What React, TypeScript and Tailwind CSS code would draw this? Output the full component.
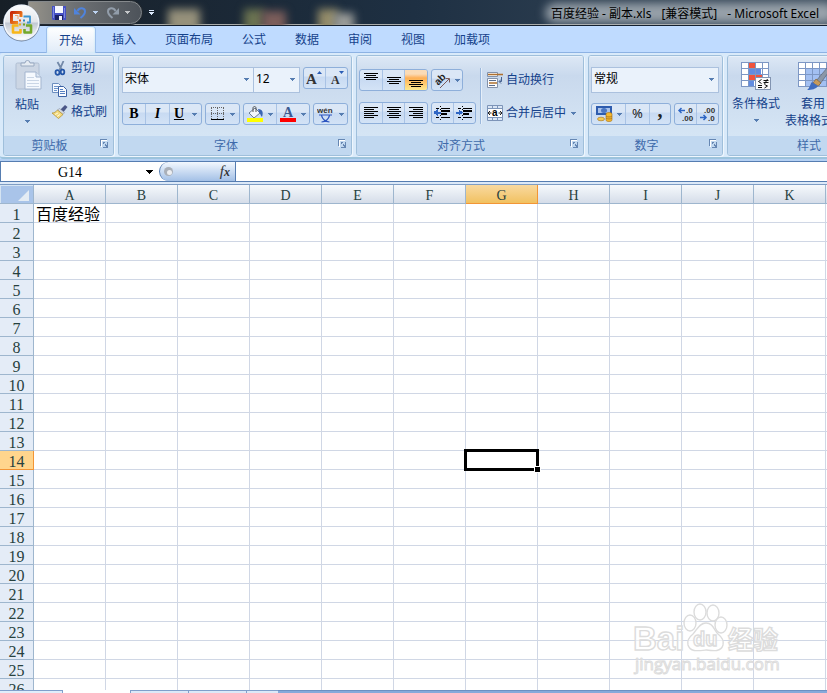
import type { ReactNode } from 'react'
import clsx from 'clsx'

const TABS = ['开始', '插入', '页面布局', '公式', '数据', '审阅', '视图', '加载项']
const COLUMNS = ['A', 'B', 'C', 'D', 'E', 'F', 'G', 'H', 'I', 'J', 'K', 'L']
const ROWS = Array.from({ length: 26 }, (_, i) => i + 1)
const CELLS: Record<string, string> = { A1: '百度经验' }
const ACTIVE = { col: 'G', row: 14 }

function Arrow({ className = 'text-[#567db1]' }: { className?: string }) {
  return (
    <svg width="5" height="3" viewBox="0 0 5 3" className={clsx('shrink-0', className)} shapeRendering="crispEdges" aria-hidden>
      <path d="M0 0h5v1H4v1H3v1H2V2H1V1H0z" fill="currentColor" />
    </svg>
  )
}

/* Horizontal strokes, each [x, y, width] */
function Lines({ rows }: { rows: number[][] }) {
  return (
    <svg width="16" height="16" viewBox="0 0 16 16" shapeRendering="crispEdges" aria-hidden>
      {rows.map(([x, y, w]) => (
        <rect key={`${x}-${y}`} x={x} y={y} width={w} height="1" fill="#000" />
      ))}
    </svg>
  )
}

const vertical = (top: number) => [0, 1, 2, 3].map((i) => [i % 2 ? 3 : 1, top + i * 2, i % 2 ? 10 : 14])
const horizontal = (short: number) => [0, 1, 2, 3, 4, 5].map((i) => [i % 2 ? short : 1, 2 + i * 2, i % 2 ? 10 : 14])

function Group({ title, className, launcher = true, children }: { title: string; className: string; launcher?: boolean; children: ReactNode }) {
  return (
    <section
      className={clsx(
        'flex h-[101px] shrink-0 flex-col overflow-hidden rounded-[3px] border border-[#9fbfdb] bg-linear-to-b from-[#dde8f5] from-0% via-[#c9d9ed] via-20% to-[#d9e9f7] shadow-[1px_1px_0_#eef6fd]',
        className,
      )}
    >
      <div className="h-20 border-t border-[#e9f1fa]">{children}</div>
      <div
        className={clsx(
          'relative flex h-[19px] items-center justify-center bg-[#c1d8f0] pt-px text-[#3e6aaa]',
          launcher && 'pr-[18px]',
        )}
      >
        {title}
        {launcher && (
          <button aria-label={`${title}设置`} className="absolute top-[3px] right-1">
            <svg width="9" height="9" viewBox="0 0 9 9" shapeRendering="crispEdges">
              <path d="M1 1h6v1H2v6H1z" fill="#fff" />
              <path d="M0 7V0h7v1H1v6z" fill="#6687b3" />
              <path d="M3 3h2v1H4v1H3zM5 5h1v1H5zM8 3v6H3V8h3V7H5V6h2V3z" fill="#6687b3" />
            </svg>
          </button>
        )}
      </div>
    </section>
  )
}

function Bar({ className, children }: { className?: string; children: ReactNode }) {
  return (
    <div
      className={clsx(
        'flex h-[22px] shrink-0 divide-x divide-[#a9c3e5] overflow-hidden rounded-[3px] border border-[#8eafda] bg-linear-to-b from-[#dbe7f6] from-40% via-[#c8daf2] via-45% to-[#d3e3f6]',
        className,
      )}
    >
      {children}
    </div>
  )
}

function Tool({ label, className = 'flex-1', arrow, active, children }: { label: string; className?: string; arrow?: boolean; active?: boolean; children: ReactNode }) {
  return (
    <button
      aria-label={label}
      className={clsx(
        'flex h-full items-center justify-center gap-1',
        active && 'bg-linear-to-b from-[#fbdbb5] from-20% via-[#fdaf54] via-40% to-[#fde98f]',
        className,
      )}
    >
      {children}
      {arrow && <Arrow />}
    </button>
  )
}

function Picker({ label, value, className }: { label: string; value: string; className: string }) {
  return (
    <div className={clsx('relative', className)}>
      <select
        aria-label={label}
        className="block h-[26px] w-full appearance-none border border-[#abc1de] bg-[#eaf2fb] pb-[2px] pl-[2px] text-black"
      >
        <option>{value}</option>
      </select>
      <span className="pointer-events-none absolute top-[11px] right-[5px]">
        <Arrow />
      </span>
    </div>
  )
}

function OfficeButton() {
  return (
    <button aria-label="Office 按钮" className="absolute top-[3px] left-[2px] z-10">
      <svg width="39" height="39" viewBox="0 0 39 39">
        <defs>
          <linearGradient id="orb" x1="0" y1="0" x2="0" y2="1">
            <stop offset="0" stopColor="#fbfcfd" />
            <stop offset=".48" stopColor="#e3e6eb" />
            <stop offset=".52" stopColor="#c2c9d4" />
            <stop offset="1" stopColor="#fdfdfe" />
          </linearGradient>
          <linearGradient id="orange" x1="0" y1="0" x2="1" y2="1">
            <stop offset="0" stopColor="#c8290a" />
            <stop offset="1" stopColor="#f89a23" />
          </linearGradient>
        </defs>
        <circle cx="19.500" cy="20" r="18.500" fill="#6b7f9c" />
        <circle cx="19.500" cy="19.500" r="18" fill="#f3f6fa" />
        <circle cx="19.500" cy="19.500" r="16.500" fill="url(#orb)" />
        <g fill="none" strokeLinejoin="round">
          <path d="M16 19.500H9.500V9.500H19V14" stroke="url(#orange)" strokeWidth="3" />
          <path d="M16 16v-3.500h-3" stroke="#f3a46a" />
          <path d="M21.500 13.500h6.500V19.500h-3" stroke="#3b94cf" strokeWidth="1.800" />
          <path d="M16.500 22.500H11v7h7.500V26" stroke="#f7b61a" strokeWidth="2.600" />
          <path d="M24 22.500h5v7h-6.500V26" stroke="#74a82b" strokeWidth="2.600" />
        </g>
        <rect x="17" y="16.500" width="2" height="2" fill="#e4571c" />
        <rect x="21" y="16.500" width="2" height="2" fill="#2f86c7" />
        <rect x="17" y="20.500" width="2" height="2" fill="#f0a818" />
        <rect x="21" y="20.500" width="2" height="2" fill="#6ba32b" />
      </svg>
    </button>
  )
}

function TitleBar() {
  return (
    <header className="relative flex h-[26px] items-start overflow-hidden border-b border-[#14202f] bg-linear-to-r from-[#171f27] via-[#1e3043] to-[#3e4f60] shadow-[inset_0_-1px_0_#a9acab]">
      {/* desktop icons seen through the glass */}
      <div className="absolute top-[9px] left-[168px] h-6 w-8 bg-[#96917b] blur-[4px]" />
      <div className="absolute top-[9px] left-[244px] h-6 w-5 bg-[#6b7351] blur-[4px]" />
      <div className="absolute top-[11px] left-[262px] h-6 w-6 bg-[#7c5e5b] blur-[4px]" />
      <div className="absolute top-[9px] left-[318px] h-6 w-5 bg-[#948c69] blur-[4px]" />
      <div className="absolute top-[13px] left-[334px] h-5 w-5 bg-[#9a9c99] blur-[4px]" />
      <div className="absolute -right-2 top-[3px] h-[20px] w-[290px] rounded-full bg-[#b0b8be]/80 blur-[5px]" />

      <div className="relative mt-px ml-7 flex h-[23px] w-[114px] items-center rounded-r-full border border-[#85898c] bg-linear-to-r from-[#96938a] via-[#6e7174] via-40% to-[#4d535a] pl-[23px] shadow-[0_0_0_1px_#22282e]">
        <button aria-label="保存">
          <svg width="14" height="14" viewBox="0 0 14 14">
            <path d="M0 0h14v14H1l-1-1z" fill="#4650c4" />
            <path d="M3 0h8v7H3z" fill="#f5f7ff" />
            <path d="M1 1h1v11H1zM12 2h1v10h-1z" fill="#7c88e0" />
            <path d="M3 9h8v5H3z" fill="#1c2266" />
            <path d="M7 10h3v4H7z" fill="#f0f2fb" />
          </svg>
        </button>
        <button aria-label="撤销" className="ml-2">
          <svg width="13" height="13" viewBox="0 0 13 13">
            <path d="M3.500 5C5.500 1 11 1.500 11 5.500c0 3-2 4.500-4.500 6.500" fill="none" stroke="#4f83dc" strokeWidth="2" />
            <path d="M0 2v6.500h6.500z" fill="#4f83dc" />
          </svg>
        </button>
        <Arrow className="ml-[6px] text-[#bcd2f0]" />
        <button aria-label="恢复" className="ml-2">
          <svg width="13" height="13" viewBox="0 0 13 13">
            <path d="M9.500 5C7.500 1 2 1.500 2 5.500c0 3 2 4.500 4.500 6.500" fill="none" stroke="#929daa" strokeWidth="2" />
            <path d="M13 2v6.500H6.500z" fill="#929daa" />
          </svg>
        </button>
        <Arrow className="ml-[6px] text-[#c4c6c8]" />
      </div>
      <button aria-label="自定义快速访问工具栏" className="relative mt-[10px] ml-[6px]">
        <svg width="7" height="6" viewBox="0 0 7 6" shapeRendering="crispEdges">
          <path d="M1 0h5v1H1zM1 2h5v1H5v1H4v1H3V4H2V3H1z" fill="#dbe8fb" />
        </svg>
      </button>
      <h1 className="relative mr-2 ml-auto flex gap-[10px] text-[12px] leading-[28px] whitespace-nowrap text-black">
        <span>百度经验 - 副本.xls</span>
        <span>[兼容模式]</span>
        <span>- Microsoft Excel</span>
      </h1>
    </header>
  )
}

function TabStrip() {
  return (
    <nav className="flex h-[27px] shrink-0 items-end gap-[5px] border-b border-[#8db2e3] bg-[#bfdbff] pl-[47px]">
      {TABS.map((tab, i) => (
        <button
          key={tab}
          className={clsx(
            'h-[26px] shrink-0 px-3 pt-[2px] text-[#15428b]',
            i === 0 && '-mb-px rounded-t-[3px] bg-linear-to-b from-white to-[#e0ebf8] shadow-[0_0_0_1px_#9cbfec,inset_0_0_2px_#b6e5f5]',
          )}
        >
          {tab}
        </button>
      ))}
    </nav>
  )
}

function ClipboardGroup() {
  return (
    <Group title="剪贴板" className="w-[111px]">
      <div className="flex">
        <button className="flex w-[46px] flex-col items-center pt-[3px]">
          <svg width="28" height="31" viewBox="0 0 28 31" className="ml-[4px]">
            <rect x="1" y="3" width="23" height="26" rx="1.500" fill="#ccd6e4" stroke="#aebdd2" />
            <path d="M6 6V3h4a2.500 2.500 0 0 1 5 0h4v3z" fill="#e5ebf2" stroke="#98a9c0" />
            <path d="M10 12h11l5 5v12H10z" fill="#f5f9fe" stroke="#a3b5cf" />
            <path d="M21 12v5h5" fill="#dce6f2" stroke="#a3b5cf" />
            <path d="M12 17.500h7M12 20.500h12M12 23.500h12M12 26.500h12" stroke="#cad6e6" />
          </svg>
          <span className="mt-[6px] leading-4">粘贴</span>
          <Arrow className="mt-[7px] text-[#567db1]" />
        </button>
        <div className="flex flex-col pl-1">
          <button className="flex h-[22px] items-center gap-[3px]">
            <svg width="14" height="15" viewBox="0 0 14 15">
              <path d="M3.500 1l4.500 8M9.500 0l-4 9" stroke="#7389a8" strokeWidth="1.800" />
              <ellipse cx="3.500" cy="11.500" rx="2" ry="2.300" fill="none" stroke="#2456a8" strokeWidth="1.800" />
              <ellipse cx="8.500" cy="11" rx="1.800" ry="2.300" fill="none" stroke="#2456a8" strokeWidth="1.800" />
            </svg>
            剪切
          </button>
          <button className="-ml-[2px] flex h-[22px] items-center gap-[3px]">
            <svg width="16" height="14" viewBox="0 0 16 14">
              <path d="M.5.5h6l2 2v7h-8z" fill="#f4f8fe" stroke="#6c8ebf" />
              <path d="M2 3.500h4M2 5.500h4M2 7.500h3" stroke="#6d94cb" />
              <path d="M6.500 3.500h5l3 3v7h-8z" fill="#fafcff" stroke="#3c62a5" />
              <path d="M8 6.500h3M8 8.500h5M8 10.500h5" stroke="#5580c2" />
            </svg>
            复制
          </button>
          <button className="-ml-[2px] flex h-[22px] items-center gap-[3px]">
            <svg width="16" height="14" viewBox="0 0 16 14">
              <path d="M13 0l2.500 2-4 5-3-2.500z" fill="#4a5687" />
              <path d="M7.500 3.500l5 4-1.500 2-5.500-4.500z" fill="#d3d8e2" stroke="#7d8699" strokeWidth=".5" />
              <path d="M5.500 5L11 9.500 6.500 13.500 0 8c2 0 4-1 5.500-3z" fill="#f3da7d" stroke="#b08c2c" strokeWidth=".7" />
              <path d="M3 9.500l3-1.500M5 11.500l3-2" stroke="#fff8d5" />
            </svg>
            格式刷
          </button>
        </div>
      </div>
    </Group>
  )
}

function FontGroup() {
  return (
    <Group title="字体" className="w-[234px]">
      <div className="flex flex-col gap-[10px] px-[3px] pt-[10px]">
        <div className="flex h-[26px] items-start">
          <Picker label="字体名称" value="宋体" className="w-[132px]" />
          <Picker label="字号" value="12" className="-ml-px w-[47px]" />
          <Bar className="ml-[3px] w-[45px]">
            <Tool label="增大字号">
              <svg width="17" height="18" viewBox="0 0 17 18">
                <text x="0" y="15" fontFamily="Liberation Serif" fontWeight="700" fontSize="15" fill="#333">A</text>
                <path d="M11 5l2.500-3L16 5z" fill="#2b5db5" />
              </svg>
            </Tool>
            <Tool label="减小字号">
              <svg width="16" height="18" viewBox="0 0 16 18">
                <text x="2" y="15" fontFamily="Liberation Serif" fontWeight="700" fontSize="12" fill="#333">A</text>
                <path d="M10 2h5l-2.500 3z" fill="#2b5db5" />
              </svg>
            </Tool>
          </Bar>
        </div>
        <div className="flex gap-[3px] font-['Liberation_Serif',serif] text-[14px] leading-4 text-black">
          <Bar className="w-20">
            <Tool label="加粗" className="w-[23px]">
              <b>B</b>
            </Tool>
            <Tool label="倾斜" className="w-6">
              <b className="italic">I</b>
            </Tool>
            <Tool label="下划线" className="flex-1" arrow>
              <b className="mr-1 underline">U</b>
            </Tool>
          </Bar>
          <Bar className="w-[35px]">
            <Tool label="边框" arrow>
              <svg width="16" height="14" viewBox="0 0 16 14" shapeRendering="crispEdges">
                <path d="M1.500 1v11M7.500 1v11M13.500 1v11M1 .5h13M1 6.500h13" stroke="#666" strokeDasharray="1 1" />
                <path d="M1 12h13v1H1z" />
              </svg>
            </Tool>
          </Bar>
          <Bar className="w-[67px]">
            <Tool label="填充颜色" arrow>
              <svg width="17" height="18" viewBox="0 0 17 18">
                <path d="M2 8l6-5 5 5-6 5z" fill="#f3f7fc" stroke="#6c7c93" />
                <path d="M6 7V3c0-2 3-2 3 0v4" fill="none" stroke="#555" />
                <path d="M11 4c5 0 5.500 4 4 8-1.500-1-1-3-3-4.500z" fill="#3a65b3" />
                <path d="M0 13h16v4H0z" fill="#ff0" />
              </svg>
            </Tool>
            <Tool label="字体颜色" arrow>
              <svg width="17" height="18" viewBox="0 0 17 18">
                <text x="3" y="12" fontFamily="Liberation Serif" fontWeight="700" fontSize="14" fill="#3c5a92">A</text>
                <path d="M0 13h16v4H0z" fill="#f00" />
              </svg>
            </Tool>
          </Bar>
          <Bar className="w-[35px]">
            <Tool label="拼音指南" arrow>
              <svg width="18" height="18" viewBox="0 0 18 18">
                <text x="0" y="8" fontFamily="Liberation Sans" fontWeight="700" fontSize="8" fill="#333">wén</text>
                <path d="M2 10h13M4.500 10.500c1 4 4 6 8 6.500M12.500 10.500c-1 4-4 6-8 6.500" fill="none" stroke="#2d55c0" strokeWidth="1.200" />
              </svg>
            </Tool>
          </Bar>
        </div>
      </div>
    </Group>
  )
}

function Indent({ flip }: { flip?: boolean }) {
  return (
    <svg width="17" height="16" viewBox="0 0 17 16" shapeRendering="crispEdges" aria-hidden>
      <path d="M2 3h3v1H2zM7 3h9v1H7zM7 5h9v2H7zM7 8h6v2H7zM2 12h3v1H2zM7 12h9v1H7zM6 1h1v1H6zM6 14h1v1H6zM6 4h1v1H6zM6 10h1v1H6z" />
      <path d={flip ? 'M6 7.500L3 5v2H0v1h3v2z' : 'M0 7.500L3 5v2h3v1H3v2z'} fill="#2f66c4" stroke="#2f66c4" />
    </svg>
  )
}

function AlignGroup() {
  return (
    <Group title="对齐方式" className="w-[228px]">
      <div className="flex pt-[11px] pl-[2px]">
        <div className="flex flex-col gap-[11px] pt-px">
          <div className="flex gap-[3px]">
            <Bar className="w-[69px]">
              <Tool label="顶端对齐"><Lines rows={vertical(1)} /></Tool>
              <Tool label="垂直居中"><Lines rows={vertical(5)} /></Tool>
              <Tool label="底端对齐" active><Lines rows={vertical(8)} /></Tool>
            </Bar>
            <Bar className="w-8">
              <Tool label="方向" arrow>
                <svg width="17" height="17" viewBox="0 0 17 17">
                  <text transform="rotate(-45 7 8)" x="1" y="10" fontFamily="Liberation Sans" fontWeight="700" fontSize="10" fill="#222">ab</text>
                  <path d="M6 16l9-9M11.500 6.500H15.500V10.500" fill="none" stroke="#7a5a5a" />
                </svg>
              </Tool>
            </Bar>
          </div>
          <div className="flex gap-[3px]">
            <Bar className="w-[69px]">
              <Tool label="文本左对齐"><Lines rows={horizontal(1)} /></Tool>
              <Tool label="居中"><Lines rows={horizontal(3)} /></Tool>
              <Tool label="文本右对齐"><Lines rows={horizontal(5)} /></Tool>
            </Bar>
            <Bar className="w-[45px]">
              <Tool label="减少缩进量"><Indent /></Tool>
              <Tool label="增加缩进量"><Indent flip /></Tool>
            </Bar>
          </div>
        </div>
        <div className="mr-[6px] ml-1 h-14 w-px bg-[#9bb8dc] shadow-[1px_0_0_#e6eff9]" />
        <div className="flex flex-col gap-[11px] pt-px">
          <button className="flex h-[22px] items-center gap-[3px]">
            <svg width="16" height="16" viewBox="0 0 16 16">
              <path d="M.5.5h10v4H.5zM.5 6.500h10v9H.5z" fill="#fbfcfe" stroke="#8392aa" />
              <path d="M2 8.500h7M2 13.500h6" stroke="#5a6c8c" />
              <path d="M1 2.500h15M2 11h8" stroke="#b0712f" strokeWidth="1.400" />
              <path d="M14.500 5v4.500h-2m1.500-2l-2 2 2 2" fill="none" stroke="#44608f" />
            </svg>
            自动换行
          </button>
          <button className="flex h-[22px] items-center gap-[3px]">
            <svg width="16" height="16" viewBox="0 0 16 16">
              <path d="M.5.5h15v15H.5z" fill="#d9e5f5" stroke="#7d94b8" />
              <path d="M0 3.500h16M0 12.500h16M5.500 1v3M10.500 1v3M5.500 12v3M10.500 12v3" stroke="#7d95b9" />
              <path d="M1 4h14v8H1z" fill="#fff" />
              <path d="M1 8h3.500M15 8h-3.500M3 6L1 8l2 2M13 6l2 2-2 2" fill="none" stroke="#222" />
              <text x="5" y="11" fontFamily="Liberation Sans" fontWeight="700" fontSize="10">a</text>
            </svg>
            合并后居中
            <Arrow className="ml-[2px] text-[#567db1]" />
          </button>
        </div>
      </div>
    </Group>
  )
}

function Decimal({ more }: { more?: boolean }) {
  return (
    <svg width="18" height="20" viewBox="0 0 18 20" aria-hidden>
      <g fontFamily="Liberation Sans" fontWeight="700" fontSize="8" fill="#333">
        <text x={more ? 9 : 5} y="9">{more ? '.0' : '.00'}</text>
        <text x={more ? 5 : 9} y="17">{more ? '.00' : '.0'}</text>
      </g>
      {more ? (
        <path d="M2 6.500h6M4.500 4L2 6.500 4.500 9" fill="none" stroke="#2f66c4" strokeWidth="1.500" />
      ) : (
        <path d="M1 13.500h6M4.500 11L7 13.500 4.500 16" fill="none" stroke="#2f66c4" strokeWidth="1.500" />
      )}
    </svg>
  )
}

function NumberGroup() {
  return (
    <Group title="数字" className="w-[135px]">
      <div className="flex flex-col gap-[10px] px-[2px] pt-[10px]">
        <Picker label="数字格式" value="常规" className="w-32" />
        <div className="flex gap-[3px]">
          <Bar className="w-20">
            <Tool label="会计数字格式" className="w-[34px]" arrow>
              <svg width="17" height="16" viewBox="0 0 17 16">
                <path d="M0 0h16v9H0z" fill="#2e5cae" />
                <path d="M2 2h12v5H2z" fill="#a9c2ea" />
                <ellipse cx="8" cy="4.500" rx="3" ry="2.500" fill="#4b77c3" />
                <path d="M10 8c0-2 6-2 6 0v6c0 2-6 2-6 0z" fill="#f4b82e" stroke="#a4701a" strokeWidth=".6" />
                <path d="M10 10c1 1.300 5 1.300 6 0M10 12c1 1.300 5 1.300 6 0" fill="none" stroke="#a4701a" strokeWidth=".8" />
                <ellipse cx="5" cy="13" rx="3.500" ry="1.800" fill="#f6ca4e" stroke="#a4701a" strokeWidth=".6" />
              </svg>
            </Tool>
            <Tool label="百分比样式" className="w-6">
              <span className="text-[13px] text-[#222]">%</span>
            </Tool>
            <Tool label="千位分隔样式">
              <span className="pb-2 font-['Liberation_Serif',serif] text-[20px] leading-4 font-bold text-[#222]">,</span>
            </Tool>
          </Bar>
          <Bar className="w-[45px]">
            <Tool label="增加小数位数"><Decimal more /></Tool>
            <Tool label="减少小数位数"><Decimal /></Tool>
          </Bar>
        </div>
      </div>
    </Group>
  )
}

function StylesGroup() {
  return (
    <Group title="样式" className="w-[164px]" launcher={false}>
      <div className="flex gap-[5px] pt-[5px] pl-1">
        <button className="flex w-12 flex-col items-center">
          <svg width="30" height="29" viewBox="0 0 30 29" shapeRendering="crispEdges">
            <path d="M1 1h27v24H1z" fill="#fff" />
            <path d="M8 1h6v6H8zM8 13h13v6H8z" fill="#f0533c" />
            <path d="M8 7h12v6H8zM8 19h5v6H8z" fill="#628ce0" />
            <path d="M1 .5h27M1 6.500h27M1 12.500h27M1 18.500h27M1 24.500h27M.5 0v25M7.500 0v25M14.500 0v25M21.500 0v25M27.500 0v25" stroke="#7d97c4" fill="none" />
            <path d="M14.500 15.500h15v12h-15z" fill="#fafafa" stroke="#8294b1" />
            <path d="M20.500 17.500L17.500 19.500l3 2M17 23.500h4M17 25.500h4M22.500 18.500h5M22.500 20.500h5M26.500 17l-3 5M23.500 22.500l3 1.500-3 2" fill="none" stroke="#111" shapeRendering="auto" />
          </svg>
          <span className="mt-1 leading-[17px]">条件格式</span>
          <Arrow className="mt-[7px] text-[#567db1]" />
        </button>
        <button className="flex w-14 flex-col items-center">
          <svg width="30" height="29" viewBox="0 0 30 29">
            <path d="M1 1h28v24H1z" fill="#fff" />
            <path d="M8 7h21v18H8z" fill="#a3c0f2" />
            <path d="M1 .5h28M1 6.500h28M1 12.500h28M1 18.500h28M1 24.500h28M.5 0v25M7.500 0v25M14.500 0v25M21.500 0v25M28.500 0v25" stroke="#7d97c4" fill="none" />
            <path d="M29 6l1 1v4l-8 11-4-3z" fill="#8b97a8" stroke="#5c6675" strokeWidth=".7" />
            <path d="M18 17l5 4-3 3-5-3z" fill="#c69a5b" stroke="#7e5928" strokeWidth=".6" />
            <path d="M14 20l6 4c-2 3-6 4-11 4 3-2 3-6 5-8z" fill="#3f6cbf" />
          </svg>
          <span className="mt-1 leading-[17px]">套用</span>
          <span className="flex items-center gap-[3px] leading-[17px] whitespace-nowrap">
            表格格式
            <Arrow />
          </span>
        </button>
      </div>
    </Group>
  )
}

function FormulaBar() {
  return (
    <div className="flex h-[21px] shrink-0 border-y border-[#567db1] bg-white">
      <input
        aria-label="名称框"
        defaultValue="G14"
        className="w-[139px] shrink-0 border-l border-[#567db1] bg-white pt-px text-center font-['Liberation_Serif',serif] text-[14px] text-black outline-none"
      />
      <button aria-label="名称列表" className="flex w-5 items-center justify-center">
        <svg width="7" height="4" viewBox="0 0 7 4" shapeRendering="crispEdges">
          <path d="M0 0h7v1H6v1H5v1H4v1H3V3H2V2H1V1H0z" />
        </svg>
      </button>
      <div className="flex w-[77px] shrink-0 items-center justify-between rounded-l-full border-r border-l border-[#567db1] bg-linear-to-b from-[#f3f8fe] to-[#a3c0e6] pr-[5px] pl-1">
        <svg width="9" height="9" viewBox="0 0 9 9" aria-hidden>
          <circle cx="4.500" cy="4.500" r="4.500" fill="#aab0b9" />
          <circle cx="5.500" cy="5.500" r="2.500" fill="#eceef1" />
        </svg>
        <button aria-label="插入函数" className="font-['Liberation_Serif',serif] text-[15px] leading-4 text-[#333] italic">
          f<span className="text-[12px] font-bold">x</span>
        </button>
      </div>
      <input aria-label="编辑栏" className="min-w-0 flex-1 bg-white px-1 text-black outline-none" />
    </div>
  )
}

function Sheet() {
  return (
    <div className="min-h-0 flex-1 overflow-hidden bg-white">
      <table className="w-[898px] table-fixed border-separate border-spacing-0 font-['Liberation_Serif','Noto_Sans_CJK_SC',serif] text-[16px] leading-[15px] text-[#27413e]">
        <thead>
          <tr className="h-[19px]">
            <th className="w-[34px] border-r border-b border-[#9eb6ce] bg-[#a9c4e9] p-0 shadow-[inset_1px_1px_0_#d5e4f2]">
              <svg width="11" height="11" viewBox="0 0 11 11" className="mt-[2px] mr-1 ml-auto block">
                <path d="M11 0v11H0z" fill="#e4ecf4" />
              </svg>
            </th>
            {COLUMNS.map((col) => (
              <th
                key={col}
                className={clsx(
                  'w-[72px] border-r border-b p-0 pt-[2px] text-[14px] font-normal',
                  col === ACTIVE.col
                    ? 'border-[#f29536] bg-linear-to-b from-[#f9d99f] to-[#f1c15f]'
                    : 'border-[#9eb6ce] bg-linear-to-b from-[#f6f9fc] to-[#d5dde9]',
                )}
              >
                {col}
              </th>
            ))}
          </tr>
        </thead>
        <tbody>
          {ROWS.map((row) => (
            <tr key={row} className="h-[19px]">
              <th
                className={clsx(
                  'border-r border-b p-0 pt-[3px] font-normal',
                  row === ACTIVE.row ? 'border-[#f29536] bg-[#ffd58d]' : 'border-[#9eb6ce] bg-[#e4ecf7]',
                )}
              >
                {row}
              </th>
              {COLUMNS.map((col) => {
                const active = col === ACTIVE.col && row === ACTIVE.row
                return (
                  <td
                    key={col}
                    className={clsx(
                      'border-r border-b border-[#d0d7e5] p-0 pt-[3px] pl-[2px] whitespace-nowrap text-black',
                      active && 'relative z-10',
                    )}
                  >
                    {CELLS[`${col}${row}`]}
                    {active && (
                      <div className="absolute -inset-[2px] border-3 border-black">
                        <div className="absolute -right-[5px] -bottom-[5px] size-[7px] border border-white bg-black" />
                      </div>
                    )}
                  </td>
                )
              })}
            </tr>
          ))}
        </tbody>
      </table>
    </div>
  )
}

function Watermark() {
  return (
    <svg width="150" height="76" viewBox="0 0 150 76" className="pointer-events-none absolute right-[44px] bottom-[14px]" aria-hidden>
      <g fill="#fff" fillOpacity=".6" stroke="#dcdcdc" strokeWidth="1.400">
        <ellipse cx="57" cy="20" rx="6" ry="8" />
        <ellipse cx="67" cy="9" rx="6" ry="8" />
        <ellipse cx="80" cy="10" rx="6" ry="8" />
        <ellipse cx="88" cy="22" rx="6" ry="8" />
        <path d="M73 20c-7 0-9 7-13 11-5 4-6 7-5 11 2 7 9 6 18 5 8 1 15 2 17-5 1-4 0-7-5-11-4-4-5-11-12-11z" />
        <text x="0" y="47" fontFamily="Liberation Sans" fontWeight="700" fontSize="33">Bai</text>
        <text x="60" y="43" fontFamily="Liberation Sans" fontWeight="700" fontSize="20">du</text>
        <text x="95" y="46" fontFamily="Noto Sans CJK SC" fontWeight="700" fontSize="25">经验</text>
        <text x="2" y="67" fontFamily="Open Sans" fontSize="17" strokeWidth="1">jingyan.baidu.com</text>
      </g>
    </svg>
  )
}

export default function App() {
  return (
    <div className="relative flex h-screen flex-col overflow-hidden bg-[#bfdbff] font-['Noto_Sans','Noto_Sans_CJK_SC',sans-serif] text-[12px] text-[#15428b]">
      <TitleBar />
      <OfficeButton />
      <TabStrip />
      <div className="flex h-[106px] shrink-0 gap-1 overflow-hidden rounded-l-[3px] border-b-2 border-[#9cc3dc] bg-[#d9eafa] pt-[2px] pl-[3px]">
        <ClipboardGroup />
        <FontGroup />
        <AlignGroup />
        <NumberGroup />
        <StylesGroup />
      </div>
      <div className="h-[2px] shrink-0 bg-[#b4d0f3]" />
      <FormulaBar />
      <div className="h-[3px] shrink-0 border-b border-[#7f9dc4] bg-[#dce9f8]" />
      <Sheet />
      <footer className="flex h-[3px] shrink-0 bg-white">
        <div className="w-[63px] border-t border-r border-[#7f9fcb] bg-[#e0eefb]" />
        <div className="ml-[67px] w-[58px] border-t border-l border-[#7f9fcb] bg-[#dce9f8]" />
        <div className="w-[58px] border-t border-l border-[#7f9fcb] bg-[#dce9f8]" />
        <div className="w-8 border-t border-l border-[#7f9fcb] bg-[#dce9f8]" />
        <div className="flex-1 border-t border-[#6d90c2] bg-[#86a9da]" />
      </footer>
      <Watermark />
    </div>
  )
}
